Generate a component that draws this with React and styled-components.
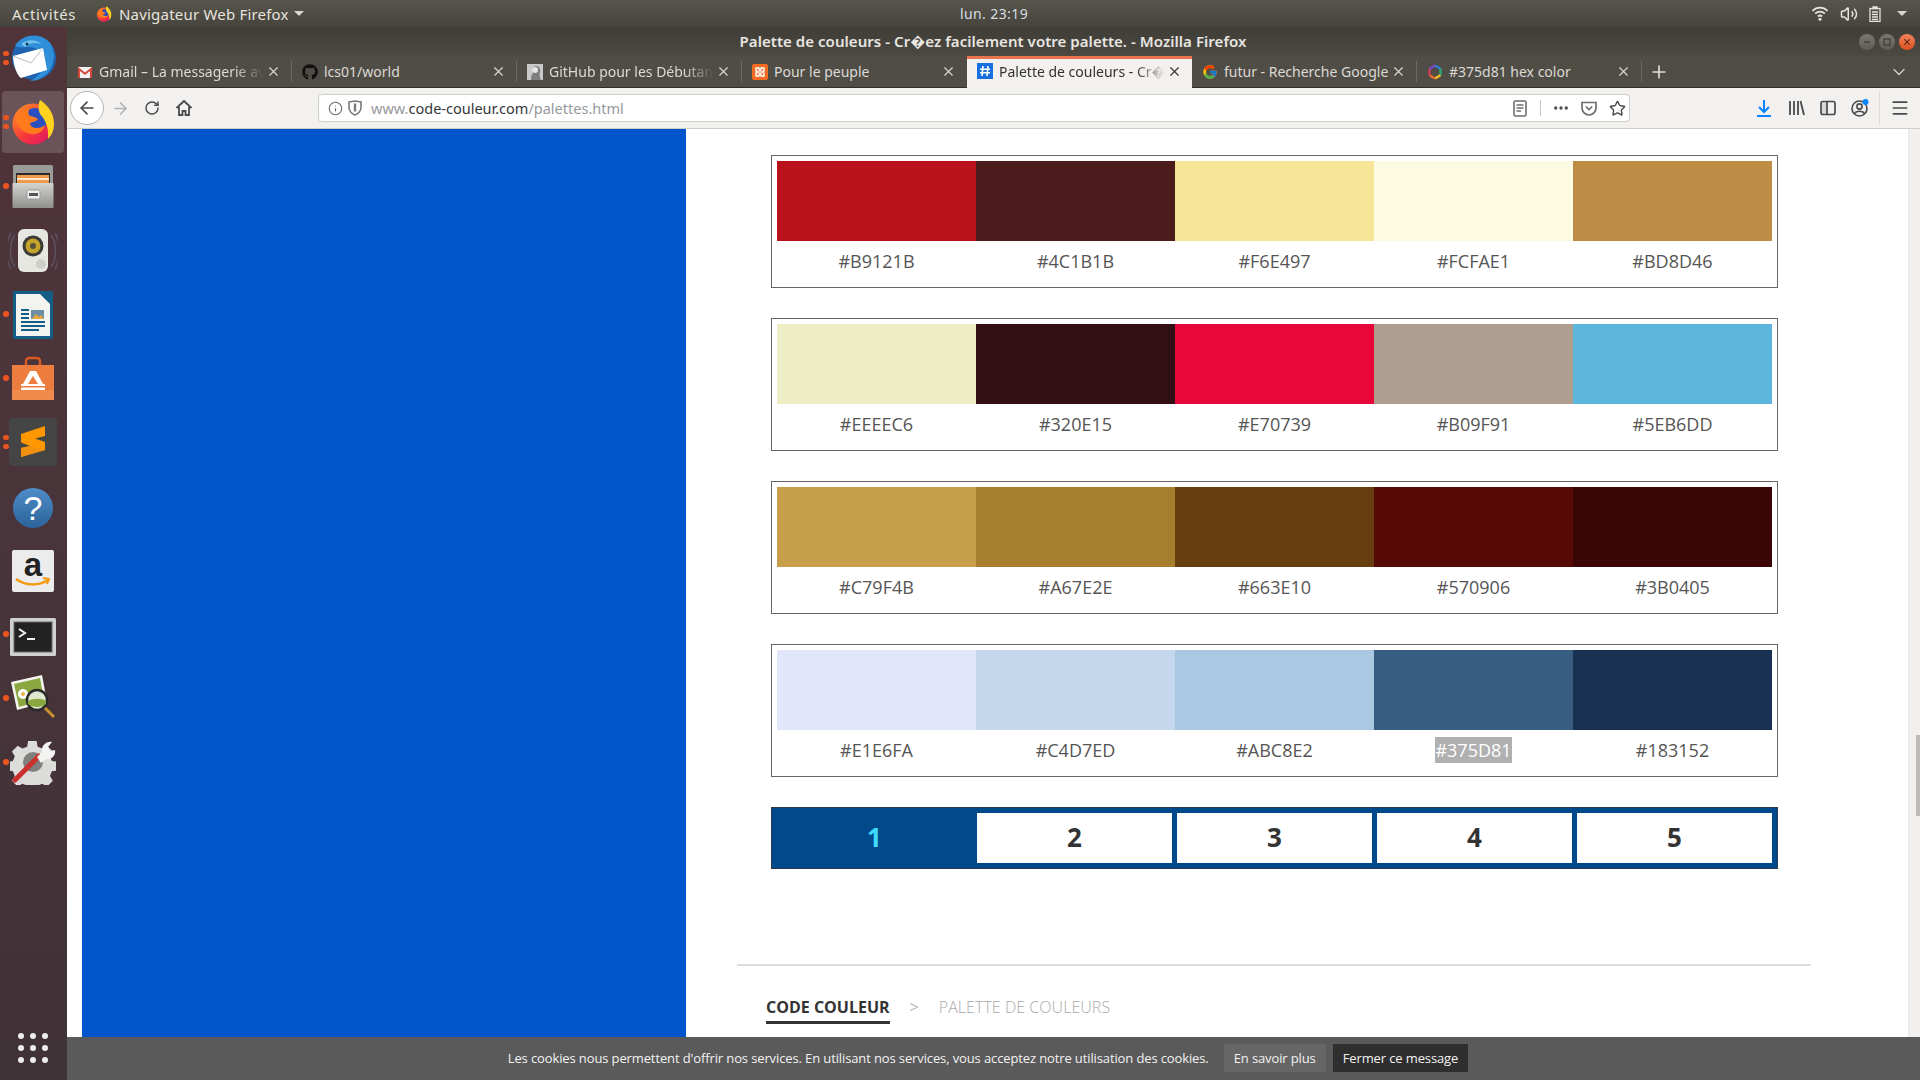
import React from 'react'
import styled, { createGlobalStyle } from 'styled-components'
import { FaGithub } from 'react-icons/fa'
import { FcGoogle } from 'react-icons/fc'
import { ArrowLeft, ArrowRight, RotateCw, Info, X, Plus, ChevronDown, Ellipsis, Star, Menu, Volume2 } from 'lucide-react'

const GlobalStyle = createGlobalStyle`
    html, body {
        margin: 0;
        padding: 0;
        height: 100%;
        overflow: hidden;
        background: #fff;
    }
    * { box-sizing: border-box; }
`

const UI_FONT = `"Noto Sans", "DejaVu Sans", sans-serif`
const PAGE_FONT = `"Open Sans", "DejaVu Sans", sans-serif`

const Screen = styled.div`
    width: 1920px;
    height: 1080px;
    display: flex;
    flex-direction: column;
    overflow: hidden;
    font-family: ${UI_FONT};
`

/* gnome top bar */
const TopBar = styled.div`
    height: 27px;
    flex: none;
    display: flex;
    align-items: center;
    padding: 0 13px 0 12px;
    background: linear-gradient(#58554d, #46443d);
    color: #e6e4de;
    font-size: 15px;
`
const TopLeft = styled.div`
    width: 948px;
    flex: none;
    display: flex;
    align-items: center;
`
const Activities = styled.span`
    width: 84px;
    letter-spacing: .6px;
`
const AppName = styled.span`
    margin-left: 7px;
    letter-spacing: .2px;
`
const Caret = styled.span`
    width: 0;
    height: 0;
    margin-left: 5px;
    border-left: 5px solid transparent;
    border-right: 5px solid transparent;
    border-top: 5px solid #d8d6d0;
`
const Clock = styled.span`
    width: 66px;
    flex: none;
    text-align: center;
    white-space: nowrap;
    color: #d5dde0;
    font-size: 14px;
    letter-spacing: .4px;
`
const TopRight = styled.div`
    flex: 1;
    display: flex;
    justify-content: flex-end;
    align-items: center;
    gap: 11px;
`

const Body = styled.div`
    flex: 1;
    min-height: 0;
    display: flex;
`

/* launcher */
const Dock = styled.div`
    width: 67px;
    flex: none;
    display: flex;
    flex-direction: column;
    gap: 2px;
    padding: 0 3px 17px 2px;
    background: linear-gradient(#50343a, #48343a 50%, #3f3236);
`
const DockSlot = styled.div`
    position: relative;
    height: 62px;
    flex: none;
    display: flex;
    align-items: center;
    justify-content: center;
    border-radius: 4px;
    background: ${p => (p.$active ? 'rgba(255,255,255,.16)' : 'transparent')};
`
const DockIcon = styled.span`
    display: flex;
    transform: translateY(${p => p.$nudge || 0}px);
`
const RunDots = styled.div`
    position: absolute;
    left: 1px;
    top: 0;
    bottom: 0;
    display: flex;
    flex-direction: column;
    justify-content: center;
    gap: 3.5px;
`
const RunDot = styled.i`
    display: block;
    width: 5.5px;
    height: 5.5px;
    border-radius: 50%;
    background: #e95420;
`
const AppsGrid = styled.div`
    margin: auto 0 0 16px;
    display: grid;
    grid-template-columns: repeat(3, 6px);
    gap: 6px;
`
const AppsDot = styled.i`
    width: 6px;
    height: 6px;
    border-radius: 50%;
    background: #eeeeee;
`

const Main = styled.div`
    flex: 1;
    min-width: 0;
    display: flex;
    flex-direction: column;
`

/* firefox window chrome */
const TitleBar = styled.div`
    height: 29px;
    flex: none;
    display: flex;
    align-items: center;
    background: linear-gradient(#3f3d37, #4c4942);
    padding: 0 5px 0 0;
`
const WindowTitle = styled.div`
    flex: 1;
    padding: 0 0 2px 64px;
    text-align: center;
    font-size: 15px;
    font-weight: 600;
    letter-spacing: .05px;
    color: #e8e6e1;
`
const WindowButton = styled.span`
    width: 16px;
    height: 16px;
    margin-left: 4px;
    border-radius: 50%;
    display: flex;
    align-items: center;
    justify-content: center;
    color: ${p => (p.$close ? '#4a2010' : '#3f3d37')};
    background: ${p => (p.$close
        ? 'linear-gradient(#f2835a, #d9521f)'
        : 'linear-gradient(#7b7871, #5f5c55)')};
`

const TabStrip = styled.div`
    height: 32px;
    flex: none;
    display: flex;
    align-items: stretch;
    background: #504d46;
    border-bottom: 1px solid #2f2e2a;
    color: #dcdad5;
`
const Tab = styled.div`
    width: 225px;
    flex: none;
    display: flex;
    align-items: center;
    gap: 6px;
    margin-bottom: ${p => (p.$active ? '-1px' : '0')};
    padding: ${p => (p.$active ? '0 10px 5px 10px' : '0 11px 0 10px')};
    font-size: 14px;
    color: ${p => (p.$active ? '#33322e' : '#dcdad5')};
    background: ${p => (p.$active ? '#f2f1ef' : 'transparent')};
    border-top: ${p => (p.$active ? '3px solid #e9754e' : '0')};
    position: relative;

    &::after {
        content: '';
        display: ${p => (p.$sep ? 'block' : 'none')};
        position: absolute;
        right: 0;
        top: 5px;
        bottom: 5px;
        width: 1px;
        background: #6d6a63;
    }
`
const TabIcon = styled.span`
    width: 16px;
    height: 16px;
    flex: none;
    display: flex;
`
const TabLabel = styled.span`
    flex: 1;
    min-width: 0;
    white-space: nowrap;
    overflow: hidden;
    -webkit-mask-image: ${p => (p.$fade ? 'linear-gradient(to right, #000 82%, transparent 100%)' : 'none')};
    mask-image: ${p => (p.$fade ? 'linear-gradient(to right, #000 82%, transparent 100%)' : 'none')};
`
const TabClose = styled.span`
    margin-left: -4px;
    flex: none;
    display: flex;
`
const NewTab = styled.span`
    width: 34px;
    display: flex;
    align-items: center;
    justify-content: center;
    color: #e0ded9;
`
const TabsEnd = styled.span`
    margin-left: auto;
    width: 31px;
    display: flex;
    align-items: center;
    color: #cfcdc8;
`

const Toolbar = styled.div`
    height: 41px;
    flex: none;
    display: flex;
    align-items: center;
    background: #f2f1ef;
    border-bottom: 1px solid #cfcdc9;
    color: #4a4a4a;
`
const BackButton = styled.span`
    width: 34px;
    height: 34px;
    margin-left: 3px;
    flex: none;
    display: flex;
    align-items: center;
    justify-content: center;
    border-radius: 50%;
    background: #fff;
    border: 1px solid #b8b6b2;
`
const ToolButton = styled.span`
    width: ${p => p.$w || 32}px;
    flex: none;
    display: flex;
    align-items: center;
    justify-content: center;
    color: ${p => p.$color || '#4a4a4a'};
`
const ToolSpacer = styled.span`
    width: 118px;
    flex: none;
`
const UrlBar = styled.div`
    width: 1312px;
    height: 28px;
    flex: none;
    display: flex;
    align-items: center;
    padding-left: 9px;
    background: #fff;
    border: 1px solid #cfcdc9;
    border-radius: 4px;
    font-size: 14.5px;
`
const UrlText = styled.span`
    flex: 1;
    margin-left: 4px;
    color: #96989c;

    b {
        font-weight: 400;
        color: #36363a;
    }
`
const UrlActions = styled.div`
    display: flex;
    align-items: center;
    height: 100%;
    color: #6e6e6e;
`
const UrlDivider = styled.span`
    width: 1px;
    height: 16px;
    margin: 0 8px 0 13px;
    background: #c9c7c3;
`
const ToolDivider = styled.span`
    width: 1px;
    height: 32px;
    margin-left: 3px;
    background: #dddbd7;
`

/* page */
const Viewport = styled.div`
    flex: 1;
    min-height: 0;
    display: flex;
    background: #fff;
`
const SideBlock = styled.div`
    width: 604px;
    margin-left: 15px;
    flex: none;
    background: #0055cc;
`
const Content = styled.div`
    flex: 1;
    min-width: 0;
    padding-top: 26px;
    font-family: ${PAGE_FONT};
`
const Palettes = styled.div`
    width: 1007px;
    margin-left: 85px;
    display: flex;
    flex-direction: column;
    gap: 30px;
`
const PaletteBox = styled.div`
    height: 133px;
    padding: 5px;
    border: 1px solid #666;
`
const PaletteRow = styled.div`
    display: grid;
    grid-template-columns: repeat(5, 199px);
`
const ColorCell = styled.div`
    display: flex;
    flex-direction: column;
    align-items: center;
`
const Swatch = styled.div`
    width: 100%;
    height: 80px;
    background: ${p => p.$color};
`
const ColorCode = styled.span`
    margin-top: 7px;
    font-size: 18px;
    line-height: 26px;
    color: ${p => (p.$selected ? '#fff' : '#555')};
    background: ${p => (p.$selected ? '#b0b0b0' : 'transparent')};
`
const Pager = styled.div`
    width: 1007px;
    height: 62px;
    margin: 30px 0 0 85px;
    padding: 5px;
    display: flex;
    gap: 5px;
    background: #004a8c;
    border: 1px solid #2c3a48;
`
const PageCell = styled.div`
    width: 195px;
    padding-bottom: 2px;
    display: flex;
    align-items: center;
    justify-content: center;
    font-size: 26px;
    font-weight: 700;
    color: ${p => (p.$current ? '#3fdcff' : '#333')};
    background: ${p => (p.$current ? '#004a8c' : '#fff')};
`
const Rule = styled.div`
    width: 1074px;
    height: 2px;
    margin: 95px 0 0 51px;
    background: #dcdcdc;
`
const Breadcrumb = styled.div`
    margin: 29px 0 0 80px;
    display: flex;
    align-items: flex-start;
    font-size: 16px;
    line-height: 24px;
`
const CrumbHome = styled.span`
    padding-bottom: 2px;
    font-weight: 700;
    color: #333;
    border-bottom: 3px solid #333;
`
const CrumbSep = styled.span`
    margin: 0 20px;
    color: #b5b5b5;
`
const CrumbCurrent = styled.span`
    font-weight: 300;
    letter-spacing: .05px;
    color: #a9a9a9;
`
const ScrollTrack = styled.div`
    width: 12px;
    flex: none;
    padding: 606px 0 0 7px;
    background: #f1f0ee;
    border-left: 1px solid #e8e7e5;
`
const ScrollThumb = styled.div`
    width: 5px;
    height: 81px;
    background: #bdbcba;
`

const CookieBar = styled.div`
    height: 43px;
    flex: none;
    display: flex;
    align-items: center;
    justify-content: center;
    padding: 0 11px 1px 0;
    background: #5a5a5a;
    color: #f2f2f2;
    font-family: ${PAGE_FONT};
    font-size: 13px;
    letter-spacing: -.12px;
`
const CookieButton = styled.span`
    height: 28px;
    margin-left: ${p => p.$gap}px;
    padding: 0 10px;
    display: flex;
    align-items: center;
    background: ${p => (p.$dark ? '#2e2e2e' : '#666')};
`

/* app icons, small drawings for the launcher */
const Thunderbird = () => (
    <svg width="52" height="52" viewBox="0 0 52 52">
        <circle cx="27" cy="26" r="22" fill="#1f63b0" />
        <path d="M8 14C14 3 30 0 40 8c8 6 9 20 3 30-5 8-14 11-20 11 8-4 13-10 14-18C38 20 28 14 20 15c-5 .5-9 1-12-1z" fill="#2f8fd8" />
        <path d="M14 12c6-5 15-5 20 0-6-2-12-1-16 3z" fill="#6fc0ee" />
        <path d="M6 24l30-8 4 22-26 8c-4-2-8-14-8-22z" fill="#fff" />
        <path d="M6 24l18 7 12-15" fill="none" stroke="#b9bcc2" strokeWidth="1" />
        <circle cx="20" cy="12" r="1.3" fill="#123" />
    </svg>
)

const Firefox = ({ size = 46 }) => (
    <svg width={size} height={size} viewBox="0 0 46 46">
        <defs>
            <linearGradient id="ffBody" x1="0" y1="0" x2="1" y2="1">
                <stop offset="0" stopColor="#ff9a1f" />
                <stop offset=".55" stopColor="#f9373c" />
                <stop offset="1" stopColor="#d6126d" />
            </linearGradient>
        </defs>
        <circle cx="23" cy="25" r="20.5" fill="url(#ffBody)" />
        <circle cx="25" cy="21" r="12" fill="#2a4fc0" />
        <path d="M30 1c9 6 14 14 14 24 0 6-2 11-6 15 1-10-2-19-8-25-2-5-2-10 0-14z" fill="#ffd21f" />
        <path d="M6 20c3-6 8-10 14-11-2 3-2 5-1 7 3 2 7 2 9 4-2 3-6 3-8 4 0 3 3 5 7 5 4 0 6-2 8-3-1 6-7 10-14 9-8-1-15-8-15-15z" fill="#ff7a1c" />
    </svg>
)

const FilesIcon = () => (
    <svg width="42" height="44" viewBox="0 0 42 44">
        <defs>
            <linearGradient id="cabinet" x1="0" y1="0" x2="0" y2="1">
                <stop offset="0" stopColor="#d4d4d2" />
                <stop offset="1" stopColor="#8f8f8d" />
            </linearGradient>
        </defs>
        <rect x="1" y="0" width="40" height="20" rx="1.5" fill="#9b9b99" />
        <rect x="4" y="8" width="34" height="12" fill="#2a2a2a" />
        <rect x="5" y="10" width="32" height="8" fill="#ee9a4c" />
        <rect x="5" y="13" width="32" height="2" fill="#fbe3c4" />
        <rect x="0.5" y="18" width="41" height="25" rx="1" fill="url(#cabinet)" />
        <rect x="15" y="25" width="13" height="9" rx="1.5" fill="#eeeeec" stroke="#9a9a98" />
        <rect x="17" y="28" width="9" height="3" fill="#555" />
    </svg>
)

const SpeakerIcon = () => (
    <svg width="50" height="44" viewBox="0 0 50 44">
        <path d="M7 6C1 14 1 30 7 38M3 4C-3 14-3 30 3 40M43 6c6 8 6 24 0 32M47 4c6 10 6 26 0 36" fill="none" stroke="#5c5160" strokeWidth="1.5" />
        <rect x="10" y="0" width="30" height="43" rx="6" fill="#e7e7e2" />
        <circle cx="25" cy="17" r="10.5" fill="#3a3a36" />
        <circle cx="25" cy="17" r="7.5" fill="#c4a32b" />
        <circle cx="25" cy="17" r="3" fill="#55503a" />
        <circle cx="33" cy="35" r="5" fill="#cfcfca" />
    </svg>
)

const WriterIcon = () => (
    <svg width="40" height="48" viewBox="0 0 40 48">
        <path d="M0 0h30l10 10v36a2 2 0 0 1-2 2H0z" fill="#135d87" />
        <path d="M3 3h24l10 10v32H3z" fill="#f3f3f0" />
        <path d="M28 0h10a2 2 0 0 1 2 2v10z" fill="#135d87" />
        <rect x="18" y="19" width="13" height="9" fill="#6d8fa6" />
        <path d="M19 28l4-5 3 3 2-2 3 4z" fill="#e8a83c" />
        <path d="M8 19h8M8 23h8M8 27h8M8 31h24M8 35h24M8 39h18" stroke="#135d87" strokeWidth="1.8" />
    </svg>
)

const SoftwareIcon = () => (
    <svg width="42" height="44" viewBox="0 0 42 44">
        <path d="M14 12V5a3 3 0 0 1 3-3h8a3 3 0 0 1 3 3v7" fill="none" stroke="#d85a22" strokeWidth="2.5" />
        <path d="M0 9h42v35H0z" fill="#ec7d3e" />
        <path d="M0 34h42v10H0z" fill="#f08a4d" />
        <path d="M18 15h6l7 13h-5l-5-8-5 8h-5z" fill="#fff" />
        <rect x="9" y="28" width="24" height="2" fill="#fff" />
        <rect x="9" y="31.5" width="24" height="2.500" rx="1" fill="#fff" />
    </svg>
)

const SublimeIcon = () => (
    <svg width="48" height="48" viewBox="0 0 48 48">
        <rect width="48" height="48" rx="4" fill="#454545" />
        <path d="M12 16L36 8v10l-10 2.500L36 24v8L12 39v-9l9-2-9-3.500z" fill="#ff9800" />
        <path d="M12 30l9-2 15 4-24 7z" fill="#f09010" />
    </svg>
)

const HelpIcon = () => (
    <svg width="42" height="42" viewBox="0 0 42 42">
        <defs>
            <linearGradient id="help" x1="0" y1="0" x2="0" y2="1">
                <stop offset="0" stopColor="#4f8ec8" />
                <stop offset="1" stopColor="#2b6299" />
            </linearGradient>
        </defs>
        <circle cx="21" cy="21" r="20" fill="url(#help)" />
        <text x="21" y="33" textAnchor="middle" fontFamily="Liberation Sans, sans-serif" fontSize="34" fill="#fff">?</text>
    </svg>
)

const AmazonIcon = () => (
    <svg width="42" height="42" viewBox="0 0 42 42">
        <rect width="42" height="42" rx="2" fill="#ececec" />
        <text x="21" y="26" textAnchor="middle" fontFamily="Liberation Sans, sans-serif" fontWeight="700" fontSize="33" fill="#222">a</text>
        <path d="M4 29c9 7 23 7 32 1" fill="none" stroke="#f39a10" strokeWidth="2.5" />
        <path d="M31 28l6 1-2 5" fill="none" stroke="#f39a10" strokeWidth="2" />
    </svg>
)

const TerminalIcon = () => (
    <svg width="46" height="38" viewBox="0 0 46 38">
        <rect width="46" height="38" rx="1.500" fill="#d0d0ce" />
        <rect x="4" y="4" width="38" height="30" fill="#222" stroke="#666" />
        <path d="M9 11l6 4-6 4" fill="none" stroke="#f2f2f2" strokeWidth="2" />
        <path d="M17 21h8" stroke="#f2f2f2" strokeWidth="2" />
    </svg>
)

const ViewerIcon = () => (
    <svg width="46" height="46" viewBox="0 0 46 46">
        <path d="M1 7L32 0l5 27-30 8z" fill="#f4f4ef" />
        <path d="M4 9l26-6 4 22-25 7z" fill="#8aa83f" />
        <circle cx="13" cy="19" r="5" fill="#fff" />
        <circle cx="13" cy="19" r="2" fill="#eeb23b" />
        <path d="M33 31l11 11" stroke="#c99231" strokeWidth="3" />
        <circle cx="27" cy="25" r="10" fill="#dfe8cf" stroke="#2a2a2a" strokeWidth="2.500" />
        <path d="M18 26c5-3 14-3 18 0v3c-4 4-14 4-18 0z" fill="#8aa83f" />
    </svg>
)

const SettingsIcon = () => (
    <svg width="46" height="46" viewBox="0 0 46 46">
        <path d="M18 1h9l1 6 5 2 5-3 6 6-3 5 2 5 6 1v9l-6 1-2 5 3 5-6 6-5-3-5 2-1 6h-9l-1-6-5-2-5 3-6-6 3-5-2-5-6-1v-9l6-1 2-5-3-5 6-6 5 3 5-2z" fill="#dcdcda" transform="translate(1 1) scale(.95)" />
        <circle cx="23" cy="23" r="10" fill="#7f7f7d" />
        <path d="M5 41L29 17" stroke="#c9302c" strokeWidth="5" strokeLinecap="round" />
        <path d="M27 18l5-5c-1-6 4-11 10-10l-4 5 2 4 5-1c1 6-4 10-9 9l-5 4z" fill="#f4f4f2" />
    </svg>
)

/* favicons */
const GmailFav = () => (
    <svg width="16" height="16" viewBox="0 0 16 16">
        <rect x="1" y="3" width="14" height="11" fill="#f2f2f2" />
        <path d="M1 14V3l7 5.500L15 3v11h-2V7L8 11 3 7v7z" fill="#d5473a" />
    </svg>
)
const FaceFav = () => (
    <svg width="16" height="16" viewBox="0 0 16 16">
        <rect width="16" height="16" fill="#c9c9c9" />
        <path d="M4 16c0-4 1-6 2-7-2-3 0-7 3-7s5 3 4 6c-1 3 0 6 1 8z" fill="#7f7f7f" />
        <circle cx="8" cy="6" r="3" fill="#e6e6e6" />
    </svg>
)
const XamppFav = () => (
    <svg width="16" height="16" viewBox="0 0 16 16">
        <rect width="16" height="16" rx="2" fill="#f26b21" />
        <path d="M4 4h3v2l1 1 1-1V4h3v3l-2 1 2 1v3H9v-2L8 9l-1 1v2H4V9l2-1-2-1z" fill="none" stroke="#fff" strokeWidth="1.400" />
    </svg>
)
const HashFav = () => (
    <svg width="16" height="16" viewBox="0 0 16 16">
        <rect width="16" height="16" fill="#1a6fe0" />
        <path d="M6 3L5 13M11 3l-1 10M3 6.300h10M3 9.800h10" stroke="#fff" strokeWidth="1.600" />
    </svg>
)
const HexFav = () => (
    <svg width="16" height="16" viewBox="0 0 16 16" fill="none" strokeWidth="2.400">
        <path d="M8 1.500l5.500 3.200" stroke="#2d7fd6" />
        <path d="M13.500 4.700v6.600" stroke="#2aa876" />
        <path d="M13.500 11.300L8 14.500" stroke="#f0c020" />
        <path d="M8 14.500l-5.500-3.200" stroke="#ee6c2b" />
        <path d="M2.500 11.300V4.700" stroke="#d63a5a" />
        <path d="M2.500 4.700L8 1.500" stroke="#7a4bc9" />
    </svg>
)

/* toolbar drawings */
const HomeGlyph = () => (
    <svg width="18" height="18" viewBox="0 0 18 18" fill="none" stroke="#4a4a4a" strokeWidth="1.800">
        <path d="M1.500 9L9 2l7.500 7" />
        <path d="M4 8v8h3.500v-4h3v4H14V8" />
    </svg>
)
const ShieldGlyph = () => (
    <svg width="14" height="16" viewBox="0 0 14 16" fill="none" stroke="#7a7a7a" strokeWidth="1.600">
        <path d="M1 2l6-1 6 1v6c0 3-3 6-6 7-3-1-6-4-6-7z" />
        <path d="M7 3.500v8" strokeWidth="2.400" />
    </svg>
)
const ReaderGlyph = () => (
    <svg width="14" height="17" viewBox="0 0 14 17" fill="none" stroke="#6e6e6e" strokeWidth="1.600">
        <rect x="1" y="1" width="12" height="15" rx="1.500" />
        <path d="M3.500 5h7M3.500 8h7M3.500 11h4.500" />
    </svg>
)
const PocketGlyph = () => (
    <svg width="16" height="15" viewBox="0 0 16 15" fill="none" stroke="#6e6e6e" strokeWidth="1.700">
        <path d="M1 1.500h14V7a7 7 0 0 1-14 0z" />
        <path d="M4.800 5.500L8 8.600l3.200-3.100" />
    </svg>
)
const DownloadGlyph = () => (
    <svg width="16" height="18" viewBox="0 0 16 18" fill="none" stroke="#0a84ff" strokeWidth="2">
        <path d="M8 1v12M3 8l5 5 5-5" />
        <path d="M1 17h14" />
    </svg>
)
const LibraryGlyph = () => (
    <svg width="17" height="16" viewBox="0 0 17 16" fill="none" stroke="#4a4a4a" strokeWidth="1.800">
        <path d="M2 1v14M6 1v14M10 1v14M12.500 1l3.500 14" />
    </svg>
)
const SidebarGlyph = () => (
    <svg width="16" height="16" viewBox="0 0 16 16" fill="none" stroke="#4a4a4a" strokeWidth="1.700">
        <rect x="1" y="1.500" width="14" height="13" rx="2" />
        <path d="M7 1.500v13" />
        <path d="M2 2.500h5v11H2z" fill="#4a4a4a" stroke="none" opacity=".15" />
    </svg>
)
const AccountGlyph = () => (
    <svg width="18" height="18" viewBox="0 0 18 18" fill="none" stroke="#4a4a4a" strokeWidth="1.600">
        <circle cx="8.500" cy="9.500" r="7.500" />
        <circle cx="8.500" cy="7.500" r="2.600" />
        <path d="M3.800 14.500c1-3 8.400-3 9.400 0" />
        <circle cx="14.500" cy="3" r="3" fill="#0a84ff" stroke="none" />
    </svg>
)
const WifiGlyph = () => (
    <svg width="18" height="15" viewBox="0 0 16 14" fill="none" stroke="#e6e4de" strokeWidth="1.600">
        <path d="M1 4.500c4-4 10-4 14 0M3.500 7.200c2.600-2.600 6.400-2.600 9 0M6 9.800c1.200-1.100 2.800-1.100 4 0" />
        <circle cx="8" cy="12.300" r="1.400" fill="#e6e4de" stroke="none" />
    </svg>
)
const BatteryGlyph = () => (
    <svg width="12" height="16" viewBox="0 0 12 16" fill="none" stroke="#e6e4de" strokeWidth="1.300">
        <rect x="1" y="2.500" width="10" height="13" />
        <path d="M4 1h4v1.500H4z" fill="#e6e4de" />
        <path d="M3 6h6M3 8.500h6M3 11h6M3 13.500h6" strokeWidth="1.400" />
    </svg>
)

const dockApps = [
    { icon: <Thunderbird />, dots: 2 },
    { icon: <Firefox />, dots: 2, active: true },
    { icon: <FilesIcon />, dots: 1, nudge: 1 },
    { icon: <SpeakerIcon />, dots: 0, nudge: 1 },
    { icon: <WriterIcon />, dots: 1, nudge: 1 },
    { icon: <SoftwareIcon />, dots: 1 },
    { icon: <SublimeIcon />, dots: 2 },
    { icon: <HelpIcon />, dots: 0, nudge: 2 },
    { icon: <AmazonIcon />, dots: 0, nudge: 1 },
    { icon: <TerminalIcon />, dots: 1, nudge: 3 },
    { icon: <ViewerIcon />, dots: 1 },
    { icon: <SettingsIcon />, dots: 1 },
]

const tabs = [
    { icon: <GmailFav />, label: 'Gmail – La messagerie avec Google', fade: true, sep: true },
    { icon: <FaGithub size={16} color="#111" />, label: 'lcs01/world', sep: true },
    { icon: <FaceFav />, label: 'GitHub pour les Débutants', fade: true, sep: true },
    { icon: <XamppFav />, label: 'Pour le peuple' },
    { icon: <HashFav />, label: 'Palette de couleurs - Cr\uFFFDez facilement', fade: true, active: true },
    { icon: <FcGoogle size={16} />, label: 'futur - Recherche Google', sep: true },
    { icon: <HexFav />, label: '#375d81 hex color', sep: true },
]

const palettes = [
    ['#B9121B', '#4C1B1B', '#F6E497', '#FCFAE1', '#BD8D46'],
    ['#EEEEC6', '#320E15', '#E70739', '#B09F91', '#5EB6DD'],
    ['#C79F4B', '#A67E2E', '#663E10', '#570906', '#3B0405'],
    ['#E1E6FA', '#C4D7ED', '#ABC8E2', '#375D81', '#183152'],
]

const App = () => (
    <Screen>
        <GlobalStyle />
        <TopBar>
            <TopLeft>
                <Activities>Activités</Activities>
                <Firefox size={16} />
                <AppName>Navigateur Web Firefox</AppName>
                <Caret />
            </TopLeft>
            <Clock>lun. 23:19</Clock>
            <TopRight>
                <WifiGlyph />
                <Volume2 size={18} color="#e6e4de" />
                <BatteryGlyph />
                <Caret />
            </TopRight>
        </TopBar>
        <Body>
            <Dock>
                {dockApps.map((app, i) => (
                    <DockSlot key={i} $active={app.active}>
                        <RunDots>
                            {Array.from({ length: app.dots }).map((_, d) => <RunDot key={d} />)}
                        </RunDots>
                        <DockIcon $nudge={app.nudge}>{app.icon}</DockIcon>
                    </DockSlot>
                ))}
                <AppsGrid>
                    {Array.from({ length: 9 }).map((_, i) => <AppsDot key={i} />)}
                </AppsGrid>
            </Dock>
            <Main>
                <TitleBar>
                    <WindowTitle>Palette de couleurs - Cr{'\uFFFD'}ez facilement votre palette. - Mozilla Firefox</WindowTitle>
                    <WindowButton><svg width="8" height="8"><path d="M1 4h6" stroke="#3f3d37" strokeWidth="1.400" /></svg></WindowButton>
                    <WindowButton><svg width="8" height="8"><rect x="1" y="1" width="6" height="6" fill="none" stroke="#3f3d37" strokeWidth="1.200" /></svg></WindowButton>
                    <WindowButton $close><X size={10} strokeWidth={2.5} /></WindowButton>
                </TitleBar>
                <TabStrip>
                    {tabs.map(tab => (
                        <Tab key={tab.label} $active={tab.active} $sep={tab.sep}>
                            <TabIcon>{tab.icon}</TabIcon>
                            <TabLabel $fade={tab.fade}>{tab.label}</TabLabel>
                            <TabClose><X size={15} strokeWidth={1.8} /></TabClose>
                        </Tab>
                    ))}
                    <NewTab><Plus size={20} strokeWidth={2} /></NewTab>
                    <TabsEnd><ChevronDown size={20} strokeWidth={1.6} /></TabsEnd>
                </TabStrip>
                <Toolbar>
                    <BackButton><ArrowLeft size={20} strokeWidth={2} /></BackButton>
                    <ToolButton><ArrowRight size={19} strokeWidth={2} color="#b0b0b0" /></ToolButton>
                    <ToolButton><RotateCw size={16} strokeWidth={2.2} /></ToolButton>
                    <ToolButton><HomeGlyph /></ToolButton>
                    <ToolSpacer />
                    <UrlBar>
                        <Info size={15} color="#6e6e6e" strokeWidth={1.8} />
                        <ToolButton $w={24}><ShieldGlyph /></ToolButton>
                        <UrlText>www.<b>code-couleur.com</b>/palettes.html</UrlText>
                        <UrlActions>
                            <ReaderGlyph />
                            <UrlDivider />
                            <ToolButton $w={24}><Ellipsis size={18} strokeWidth={2.4} /></ToolButton>
                            <ToolButton $w={32}><PocketGlyph /></ToolButton>
                            <ToolButton $w={24}><Star size={17} strokeWidth={2} /></ToolButton>
                        </UrlActions>
                    </UrlBar>
                    <ToolSpacer />
                    <ToolButton><DownloadGlyph /></ToolButton>
                    <ToolButton><LibraryGlyph /></ToolButton>
                    <ToolButton><SidebarGlyph /></ToolButton>
                    <ToolButton><AccountGlyph /></ToolButton>
                    <ToolDivider />
                    <ToolButton $w={40}><Menu size={20} strokeWidth={2} /></ToolButton>
                </Toolbar>
                <Viewport>
                    <SideBlock />
                    <Content>
                        <Palettes>
                            {palettes.map(colors => (
                                <PaletteBox key={colors[0]}>
                                    <PaletteRow>
                                        {colors.map(color => (
                                            <ColorCell key={color}>
                                                <Swatch $color={color} />
                                                <ColorCode $selected={color === '#375D81'}>{color}</ColorCode>
                                            </ColorCell>
                                        ))}
                                    </PaletteRow>
                                </PaletteBox>
                            ))}
                        </Palettes>
                        <Pager>
                            {[1, 2, 3, 4, 5].map(n => <PageCell key={n} $current={n === 1}>{n}</PageCell>)}
                        </Pager>
                        <Rule />
                        <Breadcrumb>
                            <CrumbHome>CODE COULEUR</CrumbHome>
                            <CrumbSep>&gt;</CrumbSep>
                            <CrumbCurrent>PALETTE DE COULEURS</CrumbCurrent>
                        </Breadcrumb>
                    </Content>
                    <ScrollTrack><ScrollThumb /></ScrollTrack>
                </Viewport>
                <CookieBar>
                    Les cookies nous permettent d'offrir nos services. En utilisant nos services, vous acceptez notre utilisation des cookies.
                    <CookieButton $gap={15}>En savoir plus</CookieButton>
                    <CookieButton $gap={7} $dark>Fermer ce message</CookieButton>
                </CookieBar>
            </Main>
        </Body>
    </Screen>
)

export default App
